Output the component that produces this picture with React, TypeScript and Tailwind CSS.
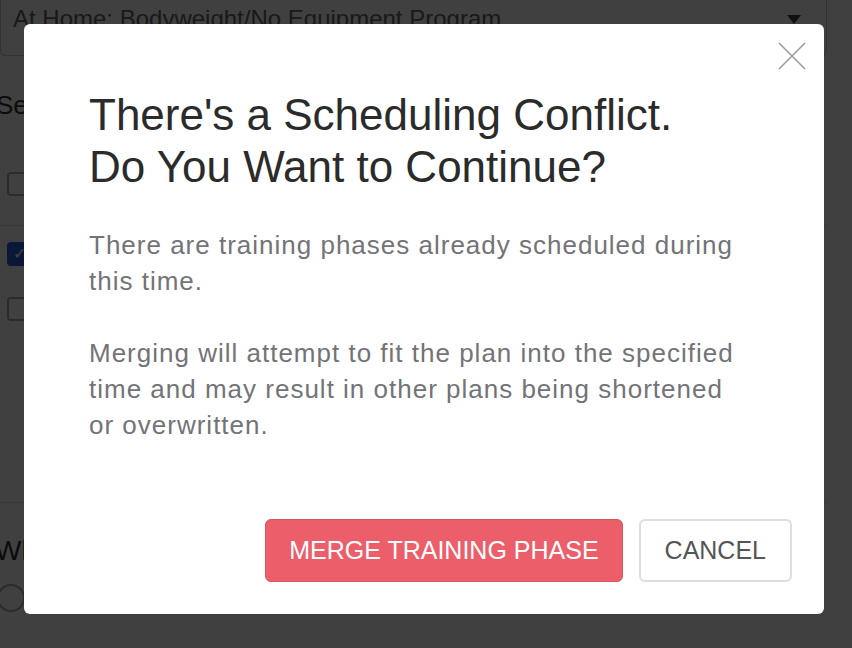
import React from 'react';

const font = { fontFamily: '"Liberation Sans", Arial, Helvetica, sans-serif' };

function BackgroundPage() {
  return (
    <div className="w-[827px] bg-white text-[#333]" style={font}>
      <div className="flex h-[56px] items-start justify-between rounded-b-md border border-t-0 border-[#ccc] pl-3 pr-[25px]">
        <span className="mt-[5px] text-[24px] leading-[28px] text-[#666]">
          At Home: Bodyweight/No Equipment Program
        </span>
        <span className="mt-[15px] h-0 w-0 border-x-[7px] border-t-[9px] border-x-transparent border-t-[#444]" />
      </div>
      <div className="-ml-[4px] pt-[34px] text-[26px] leading-[30px]">Select Phases</div>
      <div className="mt-[49px] flex items-center gap-3 border-b border-[#ddd] pb-[26px] pl-[7px]">
        <span className="h-[24px] w-[24px] rounded-[4px] border-2 border-[#aaa]" />
        <span className="text-[20px]">Phase one</span>
      </div>
      <div className="mt-[16px] flex flex-col gap-[31px] pl-[7px]">
        <div className="flex h-[24px] items-center gap-3">
          <span className="flex h-[24px] w-[24px] items-center justify-center rounded-[4px] bg-[#2a5bd7] text-[16px] text-white">✓</span>
          <span className="text-[20px]">Phase two</span>
        </div>
        <div className="flex h-[24px] items-center gap-3">
          <span className="h-[24px] w-[24px] rounded-[4px] border-2 border-[#aaa]" />
          <span className="text-[20px]">Phase three</span>
        </div>
      </div>
      <div className="mt-[181px] border-t border-[#ddd]" />
      <div className="-ml-[5px] pt-[32px] text-[28px] leading-[32px]">When do you want to start?</div>
      <div className="-ml-[3px] mt-[17px] flex items-start gap-3">
        <span className="h-[28px] w-[28px] rounded-full border-2 border-[#aaa]" />
        <span className="pl-[200px] pt-[6px] text-[20px] leading-[24px]">Beginning phase</span>
      </div>
      <div className="h-[60px]" />
    </div>
  );
}

export default function App() {
  return (
    <div className="relative h-[648px] w-[852px] overflow-hidden bg-white">
      <BackgroundPage />
      <div className="absolute inset-0 flex items-start justify-start bg-black/75 pl-[24px] pt-[24px]">
        <div
          className="relative flex h-[590px] w-[800px] flex-col rounded-[6px] bg-white pb-[32px] pl-[65px] pr-[32px]"
          style={font}
        >
          <button className="absolute right-[18px] top-[18px] h-[28px] w-[28px]" aria-label="Close">
            <svg viewBox="0 0 28 28" width="28" height="28" fill="none" stroke="#9a9a9a" strokeWidth="1.5">
              <path d="M1 1L27 27M27 1L1 27" />
            </svg>
          </button>
          <h2 className="mt-[65px] text-[44px] leading-[52px] text-[#2b2b2b]">
            There's a Scheduling Conflict.
            <br />
            Do You Want to Continue?
          </h2>
          <div className="mt-[34px] w-[648px] text-[26px] leading-[36px] tracking-[1px] text-[#737378]">
            <p>There are training phases already scheduled during this time.</p>
            <p className="mt-[36px]">
              Merging will attempt to fit the plan into the specified time and may result in other plans being shortened or overwritten.
            </p>
          </div>
          <div className="mt-auto flex justify-end gap-4">
            <button className="h-[63px] rounded-[6px] border border-[#d9545f] bg-[#ec5f6a] px-[23px] text-[25px] text-white">
              MERGE TRAINING PHASE
            </button>
            <button className="h-[63px] rounded-[6px] border-2 border-[#dedede] bg-white px-[24px] text-[25px] text-[#555]">
              CANCEL
            </button>
          </div>
        </div>
      </div>
    </div>
  );
}
